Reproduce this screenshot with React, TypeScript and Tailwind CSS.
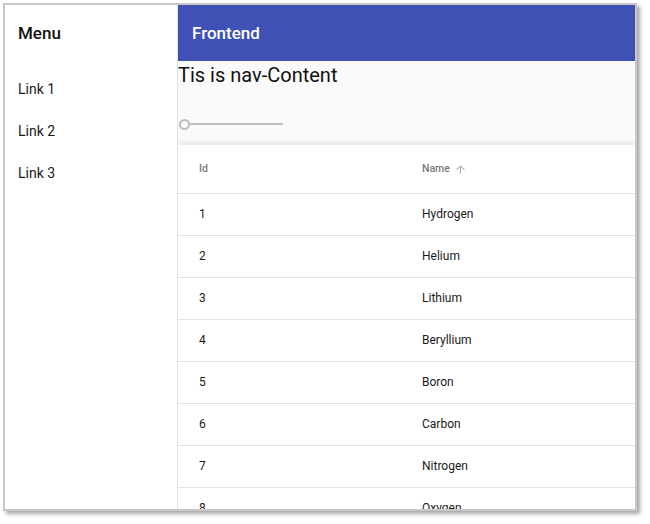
import React from "react";

const rows = [
  [1, "Hydrogen"],
  [2, "Helium"],
  [3, "Lithium"],
  [4, "Beryllium"],
  [5, "Boron"],
  [6, "Carbon"],
  [7, "Nitrogen"],
  [8, "Oxygen"],
];

export default function App() {
  return (
    <div className="w-[650px] h-[524px] bg-white pl-[3px] pt-[3px] font-['Roboto',_'Liberation_Sans',_sans-serif]">
      <div className="w-[634px] h-[508px] border-2 border-[#c8c8c8] shadow-[3px_3px_4px_rgba(0,0,0,0.35)] flex overflow-hidden bg-white">
        <aside className="w-[173px] shrink-0 border-r border-[#e3e3e3] bg-white flex flex-col">
          <div className="h-[56px] flex items-center pl-[13px] pt-[2px] text-[17px] font-medium text-[#111]">Menu</div>
          <div className="mt-[7px] flex flex-col">
            {["Link 1", "Link 2", "Link 3"].map((l) => (
              <div key={l} className="h-[42px] flex items-center pl-[13px] text-[14px] text-[#1a1a1a]">
                {l}
              </div>
            ))}
          </div>
        </aside>
        <main className="flex-1 flex flex-col overflow-hidden">
          <div className="h-[56px] shrink-0 bg-[#3f51b5] flex items-center pl-[14px] pt-[2px] text-white text-[17px] font-medium">
            Frontend
          </div>
          <div className="h-[84px] shrink-0 bg-[#fafafa] flex flex-col">
            <div className="text-[20px] leading-[28px] text-[#111]">Tis is nav-Content</div>
            <div className="mt-[29px] h-[12px] flex items-center ml-[1px]">
              <div className="w-[11px] h-[11px] rounded-full border-2 border-[#bdbdbd] bg-[#fafafa]" />
              <div className="w-[93px] h-[2px] bg-[#bdbdbd]" />
            </div>
          </div>
          <div className="flex-1 bg-white shadow-[0_-2px_6px_rgba(0,0,0,0.09)] relative">
            <div className="h-[49px] flex items-center border-b border-[#e2e2e2] text-[10.5px] font-medium text-[#7a7a7a]">
              <div className="w-[244px] pl-[21px]">Id</div>
              <div className="flex items-center gap-[4px]">
                <span>Name</span>
                <svg width="13" height="13" viewBox="0 0 24 24" fill="#b0b0b0">
                  <path d="M4 12l1.41 1.41L11 7.83V20h2V7.83l5.58 5.59L20 12l-8-8-8 8z" />
                </svg>
              </div>
            </div>
            {rows.map(([id, name]) => (
              <div key={id} className="h-[42px] flex items-center pb-[2px] border-b border-[#e2e2e2] text-[12px] text-[#1a1a1a]">
                <div className="w-[244px] pl-[21px]">{id}</div>
                <div>{name}</div>
              </div>
            ))}
          </div>
        </main>
      </div>
    </div>
  );
}
